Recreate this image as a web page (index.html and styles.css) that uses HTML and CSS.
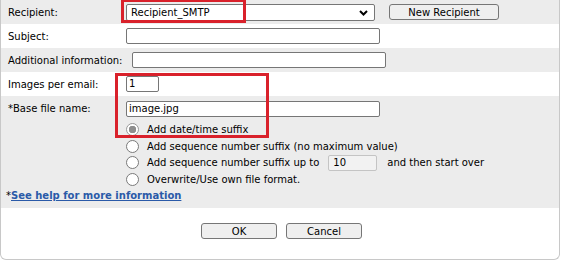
FILE: index.html
```html
<!DOCTYPE html>
<html lang="en">
<head>
  <meta charset="UTF-8" />
  <title>Email settings</title>
  <link rel="stylesheet" href="styles.css">
</head>
<body>
  <div class="panel">
    <div class="row gray">
      <label class="lbl">Recipient:</label>
      <div class="select-wrap">
        <div class="select">Recipient_SMTP
          <svg class="chev" width="9" height="6" viewBox="0 0 9 6"><path d="M1 1 L4.5 4.5 L8 1" fill="none" stroke="#000" stroke-width="2"/></svg>
        </div>
        <div class="mark mark-recipient"></div>
      </div>
      <button class="btn btn-new">New Recipient</button>
    </div>
    <div class="row">
      <label class="lbl">Subject:</label>
      <div class="input w-subject"></div>
    </div>
    <div class="row gray">
      <label class="lbl">Additional information:</label>
      <div class="input w-subject"></div>
    </div>
    <div class="row">
      <label class="lbl">Images per email:</label>
      <div class="input w-small">1</div>
    </div>
    <div class="block gray">
      <div class="mark mark-images"></div>
      <div class="row bare">
        <label class="lbl">*Base file name:</label>
        <div class="input w-base">image.jpg</div>
      </div>
      <div class="options">
        <div class="opt"><span class="radio on"></span>Add date/time suffix</div>
        <div class="opt"><span class="radio"></span>Add sequence number suffix (no maximum value)</div>
        <div class="opt"><span class="radio"></span>Add sequence number suffix up to <span class="input w-num off">10</span> and then start over</div>
        <div class="opt"><span class="radio"></span>Overwrite/Use own file format.</div>
      </div>
      <div class="help">*<a href="#">See help for more information</a></div>
    </div>
    <div class="actions">
      <button class="btn btn-act">OK</button>
      <button class="btn btn-act">Cancel</button>
    </div>
  </div>
</body>
</html>
```

FILE: styles.css
```css
body {
  margin: 0;
  font-family: 'DejaVu Sans', Verdana, sans-serif;
  font-size: 10px;
  color: #000;
  background: #fff;
}
.panel {
  position: relative;
  width: 558px;
  height: 259px;
  border: 1px solid #c8c8c8;
  border-top: none;
  border-radius: 0 0 6px 6px;
  overflow: hidden;
}
.gray {
  background: #ececec;
}
.row {
  display: flex;
  align-items: center;
  height: 24px;
}
.lbl {
  flex-shrink: 0;
  min-width: 125px;
  padding-left: 7px;
  padding-right: 10px;
  box-sizing: border-box;
}
.select-wrap {
  position: relative;
}
.select {
  position: relative;
  width: 249px;
  height: 17px;
  box-sizing: border-box;
  border: 1px solid #767676;
  border-radius: 2px;
  background: #fff;
  padding-left: 4px;
  line-height: 15px;
}
.chev {
  position: absolute;
  right: 6px;
  top: 5px;
}
.mark {
  position: absolute;
  border: 3px solid #d9212b;
  box-sizing: border-box;
  pointer-events: none;
}
.mark-recipient {
  left: -5px;
  top: -5px;
  width: 125px;
  height: 24px;
}
.mark-images {
  left: 114px;
  top: -23px;
  width: 154px;
  height: 65px;
}
.input {
  height: 16px;
  box-sizing: border-box;
  border: 1px solid #767676;
  border-radius: 2px;
  background: #fff;
  padding-left: 2px;
  line-height: 14px;
}
.w-subject {
  width: 254px;
}
.w-small {
  width: 33px;
}
.w-base {
  width: 254px;
}
.w-num {
  display: inline-block;
  width: 49px;
  margin: 0 10px 0 9px;
  vertical-align: middle;
}
.off {
  background: #f2f2f2;
  border-color: #c4c4c4;
  padding-left: 4px;
}
.btn {
  font-family: inherit;
  font-size: 10px;
  height: 16px;
  padding: 0;
  border: 1px solid #767676;
  border-radius: 3px;
  background: #efefef;
  color: #000;
}
.btn-new {
  width: 110px;
  margin-left: 14px;
}
.block {
  position: relative;
  height: 112px;
}
.bare {
  height: 25px;
}
.options {
  padding-left: 125px;
}
.opt {
  display: flex;
  align-items: center;
  height: 16.7px;
}
.radio {
  width: 13px;
  height: 13px;
  box-sizing: border-box;
  border: 1px solid #7a7a7a;
  border-radius: 50%;
  background: #fff;
  margin-right: 8px;
  flex-shrink: 0;
}
.radio.on {
  border-color: #9a9a9a;
  background: radial-gradient(circle, #8e8e8e 0 3.5px, #fff 4px);
}
.help {
  padding-left: 5px;
  margin-top: 2px;
}
.help a {
  color: #2a5aa8;
  font-weight: bold;
}
.actions {
  display: flex;
  justify-content: center;
  gap: 9px;
  padding-top: 15px;
  padding-left: 3px;
}
.btn-act {
  width: 76px;
}
```
